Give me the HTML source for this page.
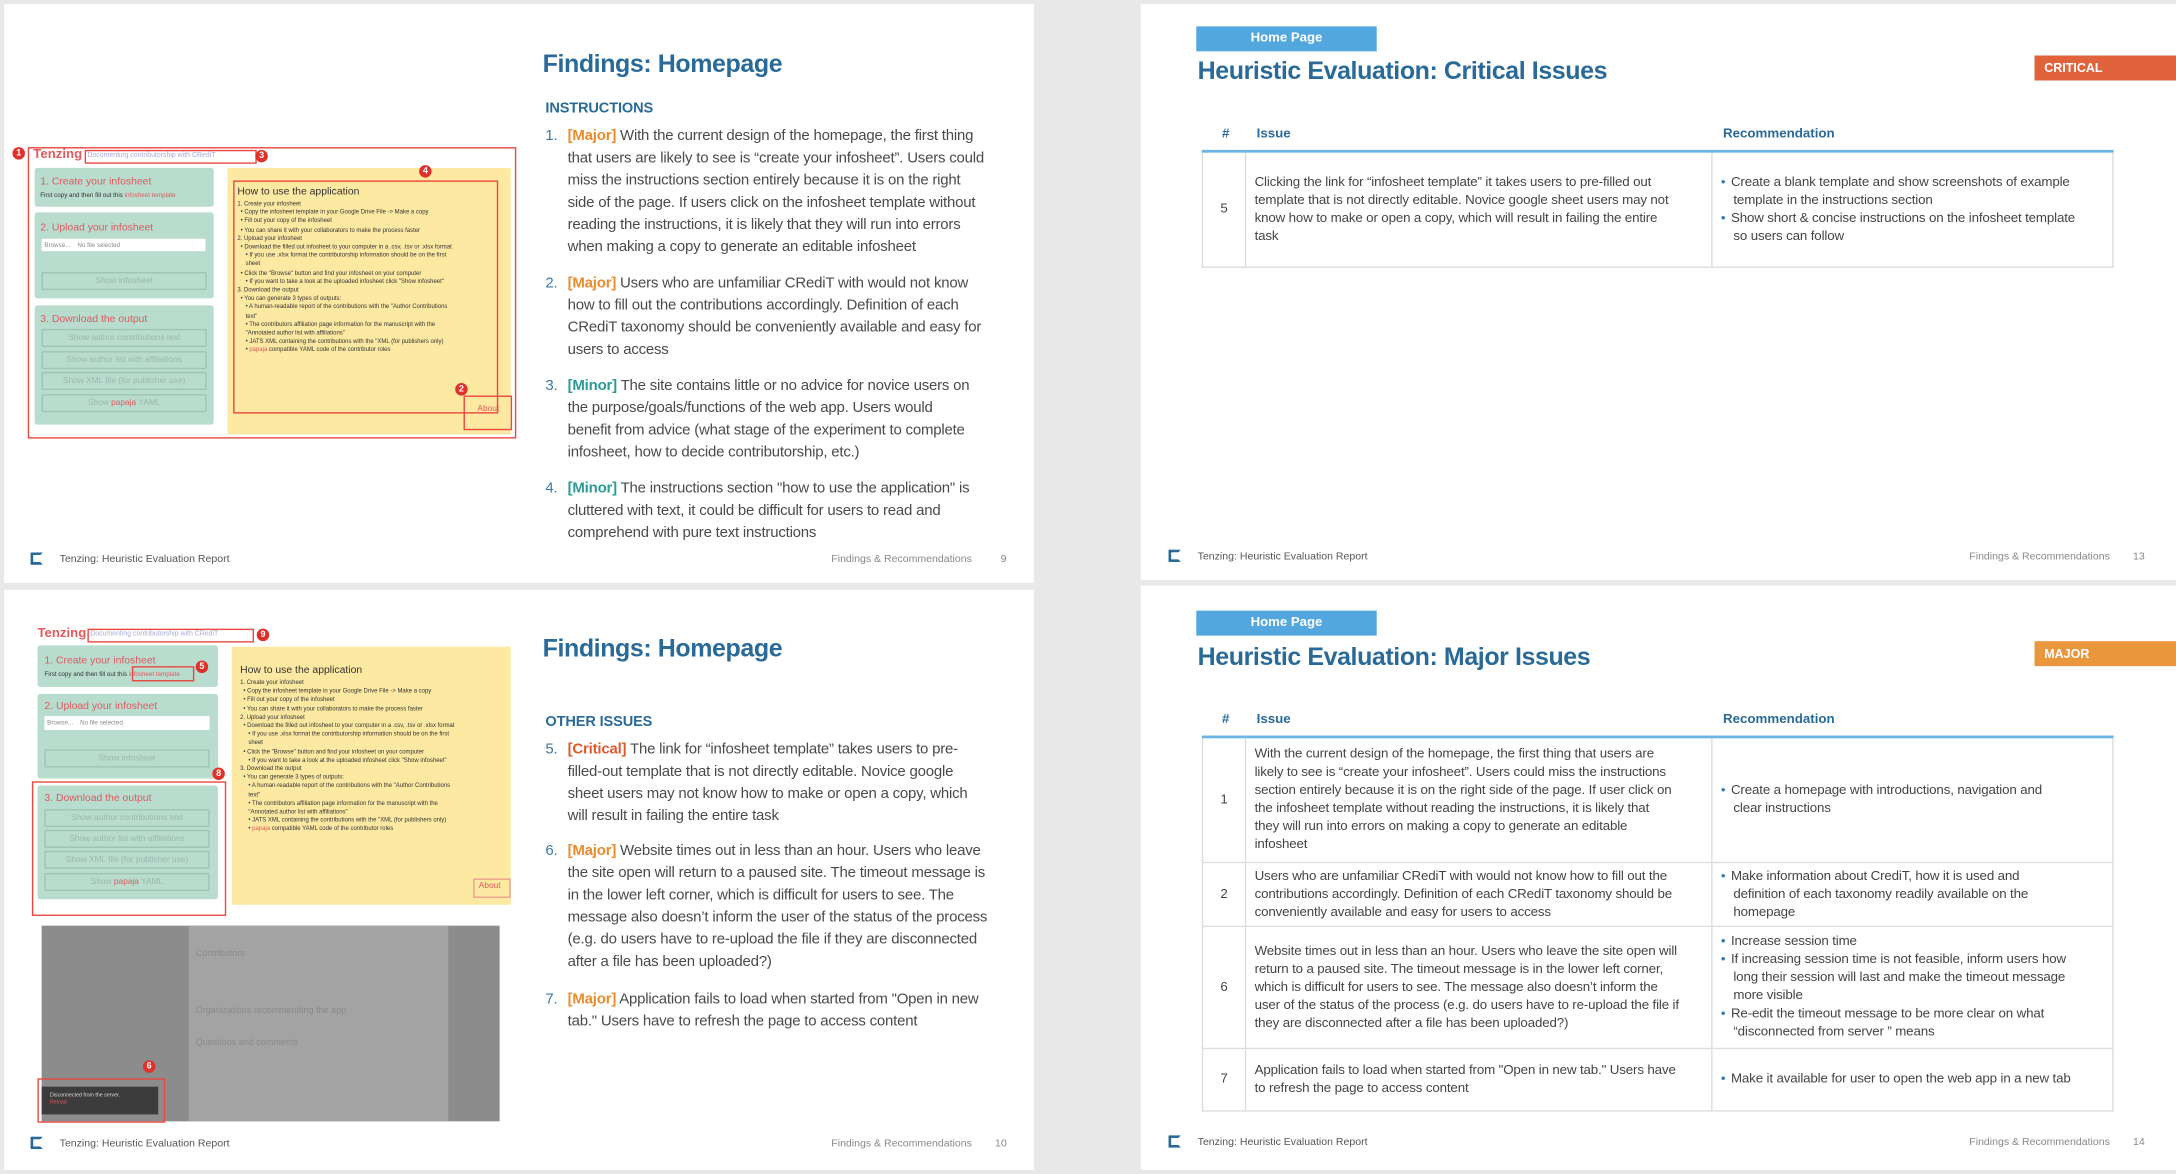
<!DOCTYPE html>
<html><head><meta charset="utf-8">
<style>
*{margin:0;padding:0;box-sizing:border-box}
html,body{width:2176px;height:1174px;overflow:hidden;background:#e8e8e8}
#w{position:absolute;left:0;top:0;width:1568px;height:846px;transform:scale(1.3878);transform-origin:0 0;font-family:"Liberation Sans",sans-serif}
.pg{position:absolute;background:#fff}
.a{position:absolute;white-space:nowrap}
h1{position:absolute;font-size:18px;font-weight:bold;color:#2a6a98;white-space:nowrap;letter-spacing:-0.3px}
.sec{position:absolute;font-size:10.5px;color:#2a6a98;font-weight:bold;letter-spacing:-0.1px}
.li{position:absolute;font-size:10.8px;line-height:16px;color:#4a4a4a;white-space:nowrap;letter-spacing:-0.15px}
.li .n{position:absolute;left:-16px;color:#3b78a8}
.mj{color:#ea8b2c;font-weight:bold}
.mn{color:#2a9a9a;font-weight:bold}
.cr{color:#e05a2e;font-weight:bold}
.ft{position:absolute;font-size:7.6px;color:#555;white-space:nowrap}
.fr{position:absolute;font-size:7.6px;color:#888;white-space:nowrap}
.ico{position:absolute;width:9px;height:9px;border:2px solid #2a6a98;border-right-color:transparent;border-radius:1px}
.tab{position:absolute;background:#52a8de;color:#fff;font-size:9.5px;font-weight:bold;text-align:center;line-height:18px}
.badge{position:absolute;color:#fff;font-size:9px;font-weight:bold;line-height:18px;padding-left:7px}
table{position:absolute;border-collapse:collapse;font-size:9.6px;color:#444;line-height:13px}
th{color:#2a6a98;font-weight:bold;text-align:left;font-size:9.6px;height:24px;border-bottom:2px solid #6bb4e3;padding-left:8px}
td{border:1px solid #ddd;padding:0 6px;vertical-align:middle;white-space:nowrap;letter-spacing:-0.1px}
td.num{text-align:center;padding:0}
ul{list-style:none}
ul li:before{content:"•";color:#3b78a8;margin-left:-9px;margin-right:4px}
ul li{padding-left:9px}
.g{position:absolute;background:#b8dcce;border-radius:2px}
.gt{position:absolute;color:#e05a60;font-size:7.5px;white-space:nowrap}
.btn{position:absolute;border:1px solid #9ec4b5;color:#9cb8ad;font-size:6px;text-align:center;border-radius:1px}
.rb{position:absolute;border:1.2px solid #e9473f}
.dot{position:absolute;width:9px;height:9px;border-radius:50%;background:#e0302a;color:#fff;font-size:6.5px;line-height:9px;text-align:center;font-weight:bold}
.y{position:absolute;background:#fde9a2}
.yt{position:absolute;font-size:4.3px;color:#333;line-height:6.2px;white-space:nowrap}
</style></head><body><div id="w">

<!-- PAGE 1 top-left -->
<div class="pg" style="left:3px;top:3px;width:742px;height:417px"></div>
<!-- mockup 1 -->
<div class="rb" style="left:20px;top:106px;width:352px;height:210px"></div>
<div class="a" style="left:24px;top:106px;font-size:9.5px;color:#e05a60;font-weight:bold">Tenzing</div>
<div class="rb" style="left:61px;top:108px;width:124px;height:10px"></div>
<div class="a" style="left:63px;top:109px;font-size:5px;color:#aad">Documenting contributorship with CRediT</div>
<div class="dot" style="left:9px;top:106px">1</div><div class="dot" style="left:184px;top:108px">3</div>
<div class="g" style="left:25px;top:121px;width:129px;height:28px"></div>
<div class="gt" style="left:29px;top:126px">1. Create your infosheet</div>
<div class="a" style="left:29px;top:138px;font-size:4.5px;color:#333">First copy and then fill out this <span style="color:#e05a60">infosheet template</span></div>
<div class="g" style="left:25px;top:153px;width:129px;height:62px"></div>
<div class="gt" style="left:29px;top:159px">2. Upload your infosheet</div>
<div class="a" style="left:30px;top:172px;width:118px;height:9px;background:#fff;font-size:4.5px;color:#888;padding:2px">Browse... &nbsp;&nbsp; No file selected</div>
<div class="btn" style="left:30px;top:196px;width:119px;height:13px;line-height:12px">Show infosheet</div>
<div class="g" style="left:25px;top:220px;width:129px;height:86px"></div>
<div class="gt" style="left:29px;top:225px">3. Download the output</div>
<div class="btn" style="left:30px;top:237px;width:119px;height:13px;line-height:12px">Show author contributions text</div>
<div class="btn" style="left:30px;top:253px;width:119px;height:13px;line-height:12px">Show author list with affiliations</div>
<div class="btn" style="left:30px;top:268px;width:119px;height:13px;line-height:12px">Show XML file (for publisher use)</div>
<div class="btn" style="left:30px;top:284px;width:119px;height:13px;line-height:12px">Show <span style="color:#e05a60">papaja</span> YAML</div>
<div class="y" style="left:164px;top:121px;width:204px;height:192px"></div>
<div class="rb" style="left:168px;top:130px;width:191px;height:168px"></div>
<div class="dot" style="left:302px;top:119px">4</div><div class="dot" style="left:328px;top:276px">2</div>
<div class="rb" style="left:334px;top:285px;width:35px;height:25px"></div>
<div class="a" style="left:344px;top:292px;font-size:6px;color:#e05a60">About</div>
<div class="a" style="left:171px;top:133px;font-size:7.5px;color:#333">How to use the application</div>
<div class="yt" style="left:171px;top:144px">1. Create your infosheet<br>&nbsp;&nbsp;• Copy the infosheet template in your Google Drive File -&gt; Make a copy<br>&nbsp;&nbsp;• Fill out your copy of the infosheet<br>&nbsp;&nbsp;• You can share it with your collaborators to make the process faster<br>2. Upload your infosheet<br>&nbsp;&nbsp;• Download the filled out infosheet to your computer in a .csv, .tsv or .xlsx format<br>&nbsp;&nbsp;&nbsp;&nbsp;&nbsp;• If you use .xlsx format the contributorship information should be on the first<br>&nbsp;&nbsp;&nbsp;&nbsp;&nbsp;sheet<br>&nbsp;&nbsp;• Click the "Browse" button and find your infosheet on your computer<br>&nbsp;&nbsp;&nbsp;&nbsp;&nbsp;• If you want to take a look at the uploaded infosheet click "Show infosheet"<br>3. Download the output<br>&nbsp;&nbsp;• You can generate 3 types of outputs:<br>&nbsp;&nbsp;&nbsp;&nbsp;&nbsp;• A human-readable report of the contributions with the "Author Contributions<br>&nbsp;&nbsp;&nbsp;&nbsp;&nbsp;text"<br>&nbsp;&nbsp;&nbsp;&nbsp;&nbsp;• The contributors affiliation page information for the manuscript with the<br>&nbsp;&nbsp;&nbsp;&nbsp;&nbsp;"Annotated author list with affiliations"<br>&nbsp;&nbsp;&nbsp;&nbsp;&nbsp;• JATS XML containing the contributions with the "XML (for publishers only)<br>&nbsp;&nbsp;&nbsp;&nbsp;&nbsp;• <span style="color:#e05a60">papaja</span> compatible YAML code of the contributor roles</div>

<h1 style="left:391px;top:36px">Findings: Homepage</h1>
<div class="sec" style="left:393px;top:72px">INSTRUCTIONS</div>
<div class="li" style="left:409px;top:90px"><span class="n">1.</span><span class="mj">[Major]</span> With the current design of the homepage, the first thing<br>that users are likely to see is “create your infosheet”.  Users could<br>miss the instructions section entirely because it is on the right<br>side of the page. If users click on the infosheet template without<br>reading the instructions, it is likely that they will run into errors<br>when making a copy to generate an editable infosheet</div>
<div class="li" style="left:409px;top:196px"><span class="n">2.</span><span class="mj">[Major]</span> Users who are unfamiliar CRediT with would not know<br>how to fill out the contributions accordingly. Definition of each<br>CRediT taxonomy should be conveniently available and easy for<br>users to access</div>
<div class="li" style="left:409px;top:270px"><span class="n">3.</span><span class="mn">[Minor]</span> The site contains little or no advice for novice users on<br>the purpose/goals/functions of the web app. Users would<br>benefit from advice (what stage of the experiment to complete<br>infosheet, how to decide contributorship, etc.)</div>
<div class="li" style="left:409px;top:344px"><span class="n">4.</span><span class="mn">[Minor]</span> The instructions section "how to use the application" is<br>cluttered with text, it could be difficult for users to read and<br>comprehend with pure text instructions</div>
<div class="ico" style="left:22px;top:398px"></div>
<div class="ft" style="left:43px;top:398px">Tenzing: Heuristic Evaluation Report</div>
<div class="fr" style="left:599px;top:398px">Findings &amp; Recommendations</div>
<div class="fr" style="left:721px;top:398px">9</div>

<!-- PAGE 3 bottom-left -->
<div class="pg" style="left:3px;top:425px;width:742px;height:418px"></div>
<div class="a" style="left:27px;top:451px;font-size:9.5px;color:#e05a60;font-weight:bold">Tenzing</div>
<div class="rb" style="left:63px;top:453px;width:120px;height:10px"></div>
<div class="a" style="left:65px;top:454px;font-size:5px;color:#aad">Documenting contributorship with CRediT</div>
<div class="dot" style="left:185px;top:453px">9</div>
<div class="g" style="left:27px;top:465px;width:130px;height:30px"></div>
<div class="gt" style="left:32px;top:471px">1. Create your infosheet</div>
<div class="a" style="left:32px;top:483px;font-size:4.5px;color:#333">First copy and then fill out this <span style="color:#e05a60">infosheet template</span></div>
<div class="rb" style="left:95px;top:480px;width:45px;height:11px"></div>
<div class="dot" style="left:141px;top:476px">5</div>
<div class="g" style="left:27px;top:500px;width:130px;height:61px"></div>
<div class="gt" style="left:32px;top:504px">2. Upload your infosheet</div>
<div class="a" style="left:32px;top:516px;width:119px;height:10px;background:#fff;font-size:4.5px;color:#888;padding:2px">Browse... &nbsp;&nbsp; No file selected</div>
<div class="btn" style="left:32px;top:540px;width:119px;height:13px;line-height:12px">Show infosheet</div>
<div class="dot" style="left:153px;top:553px">8</div>
<div class="g" style="left:27px;top:566px;width:130px;height:82px"></div>
<div class="rb" style="left:23px;top:563px;width:140px;height:97px"></div>
<div class="gt" style="left:32px;top:570px">3. Download the output</div>
<div class="btn" style="left:32px;top:583px;width:119px;height:13px;line-height:12px">Show author contributions text</div>
<div class="btn" style="left:32px;top:598px;width:119px;height:13px;line-height:12px">Show author list with affiliations</div>
<div class="btn" style="left:32px;top:613px;width:119px;height:13px;line-height:12px">Show XML file (for publisher use)</div>
<div class="btn" style="left:32px;top:629px;width:119px;height:13px;line-height:12px">Show <span style="color:#e05a60">papaja</span> YAML</div>
<div class="y" style="left:167px;top:466px;width:201px;height:186px"></div>
<div class="a" style="left:173px;top:478px;font-size:7.5px;color:#333">How to use the application</div>
<div class="yt" style="left:173px;top:489px">1. Create your infosheet<br>&nbsp;&nbsp;• Copy the infosheet template in your Google Drive File -&gt; Make a copy<br>&nbsp;&nbsp;• Fill out your copy of the infosheet<br>&nbsp;&nbsp;• You can share it with your collaborators to make the process faster<br>2. Upload your infosheet<br>&nbsp;&nbsp;• Download the filled out infosheet to your computer in a .csv, .tsv or .xlsx format<br>&nbsp;&nbsp;&nbsp;&nbsp;&nbsp;• If you use .xlsx format the contributorship information should be on the first<br>&nbsp;&nbsp;&nbsp;&nbsp;&nbsp;sheet<br>&nbsp;&nbsp;• Click the "Browse" button and find your infosheet on your computer<br>&nbsp;&nbsp;&nbsp;&nbsp;&nbsp;• If you want to take a look at the uploaded infosheet click "Show infosheet"<br>3. Download the output<br>&nbsp;&nbsp;• You can generate 3 types of outputs:<br>&nbsp;&nbsp;&nbsp;&nbsp;&nbsp;• A human-readable report of the contributions with the "Author Contributions<br>&nbsp;&nbsp;&nbsp;&nbsp;&nbsp;text"<br>&nbsp;&nbsp;&nbsp;&nbsp;&nbsp;• The contributors affiliation page information for the manuscript with the<br>&nbsp;&nbsp;&nbsp;&nbsp;&nbsp;"Annotated author list with affiliations"<br>&nbsp;&nbsp;&nbsp;&nbsp;&nbsp;• JATS XML containing the contributions with the "XML (for publishers only)<br>&nbsp;&nbsp;&nbsp;&nbsp;&nbsp;• <span style="color:#e05a60">papaja</span> compatible YAML code of the contributor roles</div>
<div class="rb" style="left:341px;top:633px;width:27px;height:14px;border-color:#e8a090"></div>
<div class="a" style="left:345px;top:636px;font-size:6px;color:#e05a60">About</div>
<!-- grey overlay -->
<div class="a" style="left:30px;top:667px;width:330px;height:141px;background:#8c8c8c"></div>
<div class="a" style="left:136px;top:667px;width:187px;height:141px;background:#a3a3a3"></div>
<div class="a" style="left:141px;top:683px;font-size:6.5px;color:#8a8a8a;line-height:9px">Contributors</div>
<div class="a" style="left:141px;top:725px;font-size:6.5px;color:#8a8a8a">Organizations recommending the app</div>
<div class="a" style="left:141px;top:748px;font-size:6.5px;color:#8a8a8a">Questions and comments</div>
<div class="a" style="left:30px;top:783px;width:84px;height:20px;background:#3c3c3c;font-size:3.8px;color:#ddd;padding:4px 6px;line-height:5px">Disconnected from the server.<br><span style="color:#e05a60">Reload</span></div>
<div class="rb" style="left:27px;top:777px;width:92px;height:32px"></div>
<div class="dot" style="left:103px;top:764px">6</div>

<h1 style="left:391px;top:457px">Findings: Homepage</h1>
<div class="sec" style="left:393px;top:514px">OTHER ISSUES</div>
<div class="li" style="left:409px;top:532px"><span class="n">5.</span><span class="cr">[Critical]</span> The link for “infosheet template” takes users to pre-<br>filled-out template that is not directly editable. Novice google<br>sheet users may not know how to make or open a copy, which<br>will result in failing the entire task</div>
<div class="li" style="left:409px;top:605px"><span class="n">6.</span><span class="mj">[Major]</span> Website times out in less than an hour. Users who leave<br>the site open will return to a paused site. The timeout message is<br>in the lower left corner, which is difficult for users to see. The<br>message also doesn’t inform the user of the status of the process<br>(e.g. do users have to re-upload the file if they are disconnected<br>after a file has been uploaded?)</div>
<div class="li" style="left:409px;top:712px"><span class="n">7.</span><span class="mj">[Major]</span> Application fails to load when started from "Open in new<br>tab." Users have to refresh the page to access content</div>
<div class="ico" style="left:22px;top:819px"></div>
<div class="ft" style="left:43px;top:819px">Tenzing: Heuristic Evaluation Report</div>
<div class="fr" style="left:599px;top:819px">Findings &amp; Recommendations</div>
<div class="fr" style="left:717px;top:819px">10</div>

<!-- PAGE 2 top-right -->
<div class="pg" style="left:822px;top:3px;width:746px;height:415px"></div>
<div class="tab" style="left:862px;top:19px;width:130px">Home Page</div>
<h1 style="left:863px;top:41px">Heuristic Evaluation: Critical Issues</h1>
<div class="badge" style="left:1466px;top:40px;width:102px;background:#e0633c">CRITICAL</div>
<table style="left:866px;top:85px;width:657px">
<tr><th style="width:31px;padding-left:14px">#</th><th style="width:336px">Issue</th><th>Recommendation</th></tr>
<tr style="height:83px"><td class="num">5</td><td>Clicking the link for “infosheet template” it takes users to pre-filled out<br>template that is not directly editable. Novice google sheet users may not<br>know how to make or open a copy, which will result in failing the entire<br>task</td><td><ul><li>Create a blank template and show screenshots of example<br>template in the instructions section</li><li>Show short &amp; concise instructions on the infosheet template<br>so users can follow</li></ul></td></tr>
</table>
<div class="ico" style="left:842px;top:396px"></div>
<div class="ft" style="left:863px;top:396px">Tenzing: Heuristic Evaluation Report</div>
<div class="fr" style="left:1419px;top:396px">Findings &amp; Recommendations</div>
<div class="fr" style="left:1537px;top:396px">13</div>

<!-- PAGE 4 bottom-right -->
<div class="pg" style="left:822px;top:422px;width:746px;height:421px"></div>
<div class="tab" style="left:862px;top:440px;width:130px">Home Page</div>
<h1 style="left:863px;top:463px">Heuristic Evaluation: Major Issues</h1>
<div class="badge" style="left:1466px;top:462px;width:102px;background:#ea963d">MAJOR</div>
<table style="left:866px;top:507px;width:657px">
<tr><th style="width:31px;padding-left:14px">#</th><th style="width:336px">Issue</th><th>Recommendation</th></tr>
<tr style="height:90px"><td class="num">1</td><td>With the current design of the homepage, the first thing that users are<br>likely to see is “create your infosheet”.  Users could miss the instructions<br>section entirely because it is on the right side of the page. If user click on<br>the infosheet template without reading the instructions, it is likely that<br>they will run into errors on making a copy to generate an editable<br>infosheet</td><td><ul><li>Create a homepage with introductions, navigation and<br>clear instructions</li></ul></td></tr>
<tr style="height:46px"><td class="num">2</td><td>Users who are unfamiliar CRediT with would not know how to fill out the<br>contributions accordingly. Definition of each CRediT taxonomy should be<br>conveniently available and easy for users to access</td><td><ul><li>Make information about CrediT, how it is used and<br>definition of each taxonomy readily available on the<br>homepage</li></ul></td></tr>
<tr style="height:88px"><td class="num">6</td><td>Website times out in less than an hour. Users who leave the site open will<br>return to a paused site. The timeout message is in the lower left corner,<br>which is difficult for users to see. The message also doesn’t inform the<br>user of the status of the process (e.g. do users have to re-upload the file if<br>they are disconnected after a file has been uploaded?)</td><td><ul><li>Increase session time</li><li>If increasing session time is not feasible, inform users how<br>long their session will last and make the timeout message<br>more visible</li><li>Re-edit the timeout message to be more clear on what<br>“disconnected from server ” means</li></ul></td></tr>
<tr style="height:45px"><td class="num">7</td><td>Application fails to load when started from "Open in new tab." Users have<br>to refresh the page to access content</td><td><ul><li>Make it available for user to open the web app in a new tab</li></ul></td></tr>
</table>
<div class="ico" style="left:842px;top:818px"></div>
<div class="ft" style="left:863px;top:818px">Tenzing: Heuristic Evaluation Report</div>
<div class="fr" style="left:1419px;top:818px">Findings &amp; Recommendations</div>
<div class="fr" style="left:1537px;top:818px">14</div>

</div></body></html>
